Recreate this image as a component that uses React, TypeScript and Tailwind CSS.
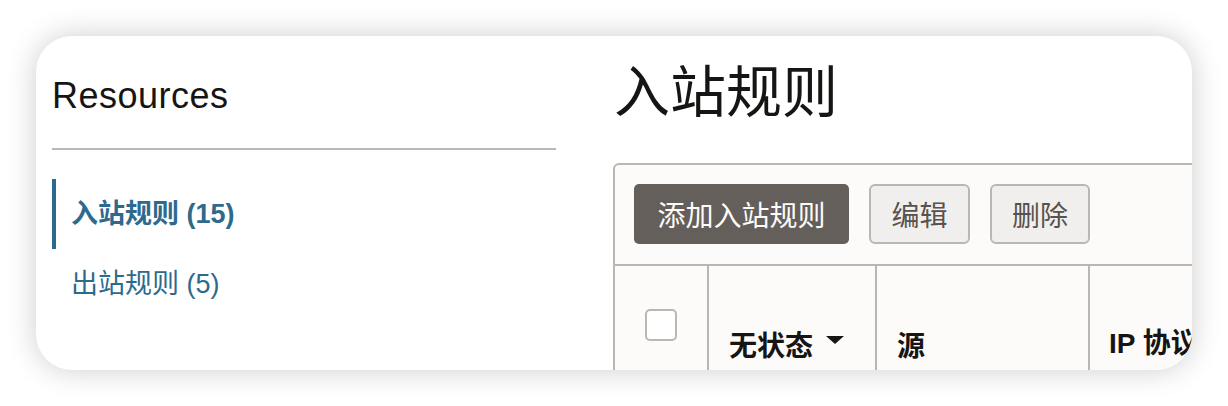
const sans = '"Liberation Sans", "Noto Sans CJK SC", sans-serif';
const cjk = '"Noto Sans CJK SC", "Liberation Sans", sans-serif';

const Caret = () => (
  <svg width="18" height="8" viewBox="0 0 18 8" className="ml-[13px] mt-[6px]">
    <path d="M0 0 H18 L9 8 Z" fill="#161513" />
  </svg>
);

const App = () => {
  return (
    <div className="w-[1228px] h-[406px] bg-white p-9" style={{ fontFamily: sans }}>
      <div className="h-[334px] rounded-[36px] bg-white shadow-[0_0_30px_rgba(0,0,0,0.2)] overflow-hidden flex">
        {/* Sidebar */}
        <aside className="w-[520px] shrink-0 pl-4 pt-10">
          <h2 className="text-[36px] leading-[40px] text-[#161513] tracking-[0.5px]">Resources</h2>
          <div className="mt-8 h-[2px] bg-[#bdb7b1]" />
          <nav className="mt-[29px] text-[27px] text-[#2d6a8d]">
            <a href="#" className="flex items-center h-[70px] border-l-4 border-[#2d6a8d] pl-[15px] font-bold">
              入站规则 (15)
            </a>
            <a href="#" className="flex items-center h-[70px] pl-[19px]">
              出站规则 (5)
            </a>
          </nav>
        </aside>

        {/* Main */}
        <main className="ml-[57px] flex-1 min-w-0 pt-6">
          <h1 className="text-[56px] leading-[56px] text-[#161513] pl-px" style={{ fontFamily: cjk }}>
            入站规则
          </h1>
          <div className="mt-[47px] w-[760px] border-2 border-[#bcb6b0] rounded-tl-md bg-[#fcfbfa]">
            {/* Toolbar */}
            <div
              className="flex gap-5 px-[19px] pt-[19px] pb-[20px] border-b-2 border-[#bcb6b0] text-[28px]"
              style={{ fontFamily: cjk }}
            >
              <button className="w-[215px] h-[60px] rounded-[5px] bg-[#645f5b] text-[#fcfbfa] flex items-center justify-center leading-none">
                添加入站规则
              </button>
              <button className="w-[101px] h-[60px] rounded-[6px] border-2 border-[#bcb6b0] bg-[#f1efed] text-[#57524e] flex items-center justify-center leading-none">
                编辑
              </button>
              <button className="w-[100px] h-[60px] rounded-[6px] border-2 border-[#bcb6b0] bg-[#f1efed] text-[#57524e] flex items-center justify-center leading-none">
                删除
              </button>
            </div>

            {/* Header row */}
            <div className="flex h-[130px] text-[28px] font-bold text-[#161513] leading-[28px]">
              <div className="w-[92px] shrink-0 flex justify-center pt-[43px]">
                <span className="block w-8 h-8 rounded-[5px] border-2 border-[#bcb6b0] bg-white" />
              </div>
              <div className="w-[168px] shrink-0 border-l-2 border-[#bcb6b0] pl-5 pt-[64px] flex items-start" style={{ fontFamily: cjk }}>
                无状态
                <Caret />
              </div>
              <div className="w-[213px] shrink-0 border-l-2 border-[#bcb6b0] pl-5 pt-[64px]" style={{ fontFamily: cjk }}>
                源
              </div>
              <div className="flex-1 border-l-2 border-[#bcb6b0] pl-[19px] pt-[64px] whitespace-nowrap">
                IP 协议
              </div>
            </div>
          </div>
        </main>
      </div>
    </div>
  );
};

export default App;
